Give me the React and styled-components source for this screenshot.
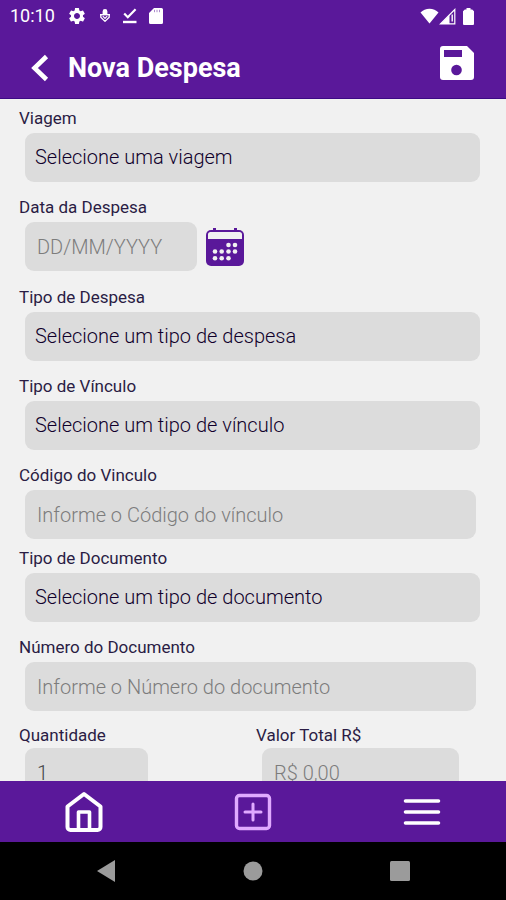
import React, { useState } from 'react'
import { MdSettings } from 'react-icons/md'
import styled, { createGlobalStyle } from 'styled-components'

const purple = '#5a189a'
const ink = '#10002b'

const GlobalStyle = createGlobalStyle`
	* {
		box-sizing: border-box;
	}

	body {
		margin: 0;
		background: #f1f1f1;
		font-family: Roboto, 'Liberation Sans', sans-serif;
		color: ${ink};
	}

	button, input, select {
		font: inherit;
		color: inherit;
	}
`

const Screen = styled.div`
	display: flex;
	flex-direction: column;
	height: 100vh;
`

const StatusBar = styled.div`
	display: flex;
	align-items: center;
	justify-content: space-between;
	height: 32px;
	padding: 0 32px 0 10px;
	background: ${purple};
	color: #fff;
	font-size: 18px;
	line-height: 32px;
`

const StatusGroup = styled.div`
	display: flex;
	align-items: center;
	gap: ${p => p.$gap}px;

	svg {
		display: block;
	}
`

const Header = styled.header`
	display: flex;
	align-items: center;
	height: 67px;
	padding: 6px 32px 0 30px;
	background: ${purple};
	border-bottom: 1px solid #3c0a85;
	color: #fff;
`

const Title = styled.h1`
	flex: 1;
	margin: 0 0 0 18px;
	font-size: 27px;
	line-height: 32px;
	font-weight: 700;
`

const IconButton = styled.button`
	display: flex;
	align-items: center;
	justify-content: center;
	padding: 0;
	border: 0;
	background: none;
	cursor: pointer;
`

const SaveButton = styled(IconButton)`
	margin-bottom: 10px;
`

const Form = styled.form`
	flex: 1;
	min-height: 0;
	padding: 9px 19px 0;
	overflow-y: auto;
	scrollbar-width: none;
`

const Field = styled.div`
	display: flex;
	flex-direction: column;
	gap: ${p => (p.$tight ? 3 : 5)}px;
	margin-bottom: ${p => p.$space ?? 15}px;
`

const Label = styled.label`
	color: #2a1c44;
	font-size: 17px;
	line-height: 20px;
`

const Select = styled.select`
	appearance: none;
	height: 49px;
	margin: 0 7px 0 6px;
	padding: 0 10px 2px;
	border: 0;
	border-radius: 9px;
	background: #dcdcdc;
	font-size: 20px;
	font-weight: 300;
`

const Input = styled.input`
	width: ${p => (p.$width ? `${p.$width}px` : 'auto')};
	height: 49px;
	margin: 0 11px 0 6px;
	padding: 0 12px;
	border: 0;
	border-radius: 9px;
	background: #dcdcdc;
	color: #444;
	font-size: 20px;
	font-weight: 300;

	&::placeholder {
		color: #7c7c7c;
		opacity: 1;
	}
`

const DateRow = styled.div`
	display: flex;
	height: 50px;

	${Input} {
		margin-right: 9px;
	}
`

const Columns = styled.div`
	display: grid;
	grid-template-columns: 1fr 1fr;
	gap: 6px;
`

const TabBar = styled.nav`
	display: grid;
	grid-template-columns: repeat(3, 1fr);
	height: 61px;
	background: ${purple};
	color: #fff;
`

const SystemBar = styled.div`
	display: grid;
	grid-template-columns: repeat(3, 1fr);
	height: 58px;
	padding: 0 33px;
	background: #000;
	color: #9b9b9b;
`

function DebugIcon() {
	return (
		<svg width='12' height='16' viewBox='0 0 12 16' fill='none' stroke='currentColor'>
			<path d='M3.6 6V3.4a2.4 2.4 0 0 1 4.8 0V6z' fill='currentColor' stroke='none' />
			<path d='M1 6.7h10' strokeWidth='1.4' />
			<path d='M1.8 7v2.2L6 13.4l4.2-4.2V7' strokeWidth='1.3' strokeLinejoin='round' />
			<path d='M3.8 8.2L6 10.4l2.2-2.2' strokeWidth='1.2' />
		</svg>
	)
}

function DoneIcon() {
	return (
		<svg width='14' height='16' viewBox='0 0 14 16' fill='none' stroke='currentColor' strokeWidth='2.2'>
			<path d='M1.2 5.5l3.6 3.7L12.6 1.2' />
			<path d='M0 14h13.5' strokeWidth='2.4' />
		</svg>
	)
}

function SdCardIcon() {
	return (
		<svg width='14' height='16' viewBox='0 0 14 16'>
			<path
				d='M5 0h7.5A1.5 1.5 0 0 1 14 1.5v13a1.5 1.5 0 0 1-1.5 1.5h-11A1.5 1.5 0 0 1 0 14.5V5z'
				fill='currentColor'
			/>
			<path d='M5.5 1.8v2.4M8 1.8v2.4M10.5 1.8v2.4' stroke={purple} strokeOpacity='.5' />
		</svg>
	)
}

function WifiIcon() {
	return (
		<svg width='19' height='16' viewBox='0 0 19 16' fill='currentColor'>
			<path d='M.5 4.6C5 -.6 14 -.6 18.5 4.6L9.5 15.5z' />
		</svg>
	)
}

function SignalIcon() {
	return (
		<svg width='17' height='17' viewBox='0 0 17 17'>
			<path d='M1.5 15.8H15.8V1.5z' fill='none' stroke='currentColor' strokeWidth='1.2' />
			<path d='M1.5 16L10.5 7v9z' fill='currentColor' />
			<path d='M13.2 6.5v7' stroke='currentColor' strokeWidth='1.4' />
		</svg>
	)
}

function BatteryIcon() {
	return (
		<svg width='11' height='17' viewBox='0 0 11 17' fill='currentColor'>
			<path d='M3.5 0h4v1.5h1.7L11 3.3V16a1 1 0 0 1-1 1H1a1 1 0 0 1-1-1V3.3L1.8 1.5h1.7z' />
		</svg>
	)
}

function BackIcon() {
	return (
		<svg width='20' height='28' viewBox='0 0 20 28' fill='none' stroke='currentColor'>
			<path d='M16.5 2.5L4.5 14l12 11.5' strokeWidth='4.6' />
		</svg>
	)
}

function SaveIcon() {
	return (
		<svg width='34' height='34' viewBox='0 0 34 34'>
			<path
				d='M3 0h24l7 7v24a3 3 0 0 1-3 3H3a3 3 0 0 1-3-3V3a3 3 0 0 1 3-3z'
				fill='#fff'
			/>
			<path d='M4 4h18v7H4z' fill={purple} />
			<circle cx='16.5' cy='24' r='5.3' fill={purple} />
		</svg>
	)
}

const dots = [
	[22.5, 17], [29, 17],
	[9, 23.5], [15.7, 23.5], [22.5, 23.5], [29, 23.5],
	[9, 30.2], [15.7, 30.2], [22.5, 30.2],
]

function CalendarIcon() {
	return (
		<svg width='38' height='38' viewBox='0 0 38 38'>
			<path d='M7 0h3v4H7zM28 0h3v4h-3z' fill={purple} />
			<rect y='2' width='38' height='36' rx='5' fill={purple} />
			<path d='M2 11V6.5A2.5 2.5 0 0 1 4.5 4h29A2.5 2.5 0 0 1 36 6.5V11z' fill='#f1f1f1' />
			{dots.map(([x, y]) => (
				<circle key={`${x}-${y}`} cx={x} cy={y} r='2.3' fill='#f1f1f1' />
			))}
		</svg>
	)
}

function HomeIcon() {
	return (
		<svg width='38' height='42' viewBox='0 0 38 42' fill='none' stroke='currentColor' strokeWidth='4' strokeLinejoin='round'>
			<path d='M2.5 15.5L19 3l16.5 12.5V36a3 3 0 0 1-3 3h-27a3 3 0 0 1-3-3z' />
			<path d='M13.5 39V21h11v18' strokeWidth='3.6' />
		</svg>
	)
}

function AddIcon() {
	return (
		<svg width='38' height='38' viewBox='0 0 38 38' fill='none' stroke='#e0aaff' strokeWidth='3.4'>
			<rect x='2.5' y='2.5' width='33' height='33' rx='3' />
			<path d='M19 11v16M11 19h16' strokeLinecap='round' strokeWidth='3' />
		</svg>
	)
}

function MenuIcon() {
	return (
		<svg width='38' height='28' viewBox='0 0 38 28' stroke='currentColor' strokeWidth='3.6' strokeLinecap='round'>
			<path d='M2.5 3h33M2.5 14h33M2.5 25h33' />
		</svg>
	)
}

function SelectField({ id, label, placeholder }) {
	return (
		<Field>
			<Label htmlFor={id}>{label}</Label>
			<Select id={id}>
				<option>{placeholder}</option>
			</Select>
		</Field>
	)
}

export default function App() {
	const [quantidade, setQuantidade] = useState('1')

	return (
		<Screen>
			<GlobalStyle />
			<StatusBar>
				<StatusGroup $gap={12}>
					<span>10:10</span>
					<MdSettings size={20} />
					<DebugIcon />
					<DoneIcon />
					<SdCardIcon />
				</StatusGroup>
				<StatusGroup $gap={7}>
					<StatusGroup $gap={0}>
						<WifiIcon />
						<SignalIcon />
					</StatusGroup>
					<BatteryIcon />
				</StatusGroup>
			</StatusBar>
			<Header>
				<IconButton type='button' aria-label='Voltar'>
					<BackIcon />
				</IconButton>
				<Title>Nova Despesa</Title>
				<SaveButton type='submit' form='despesa' aria-label='Salvar'>
					<SaveIcon />
				</SaveButton>
			</Header>

			<Form id='despesa' onSubmit={e => e.preventDefault()}>
				<SelectField id='viagem' label='Viagem' placeholder='Selecione uma viagem' />
				<Field>
					<Label htmlFor='data'>Data da Despesa</Label>
					<DateRow>
						<Input id='data' $width={172} placeholder='DD/MM/YYYY' />
						<IconButton type='button' aria-label='Abrir calendário'>
							<CalendarIcon />
						</IconButton>
					</DateRow>
				</Field>
				<SelectField id='tipo-despesa' label='Tipo de Despesa' placeholder='Selecione um tipo de despesa' />
				<SelectField id='tipo-vinculo' label='Tipo de Vínculo' placeholder='Selecione um tipo de vínculo' />
				<Field $space={9}>
					<Label htmlFor='codigo'>Código do Vinculo</Label>
					<Input id='codigo' placeholder='Informe o Código do vínculo' />
				</Field>
				<SelectField id='tipo-documento' label='Tipo de Documento' placeholder='Selecione um tipo de documento' />
				<Field $space={14}>
					<Label htmlFor='numero'>Número do Documento</Label>
					<Input id='numero' placeholder='Informe o Número do documento' />
				</Field>
				<Columns>
					<Field $tight>
						<Label htmlFor='quantidade'>Quantidade</Label>
						<Input
							id='quantidade'
							$width={123}
							value={quantidade}
							onChange={e => setQuantidade(e.target.value)}
						/>
					</Field>
					<Field $tight>
						<Label htmlFor='valor'>Valor Total R$</Label>
						<Input id='valor' $width={197} placeholder='R$ 0,00' />
					</Field>
				</Columns>
			</Form>

			<TabBar>
				<IconButton type='button' aria-label='Início'>
					<HomeIcon />
				</IconButton>
				<IconButton type='button' aria-label='Adicionar'>
					<AddIcon />
				</IconButton>
				<IconButton type='button' aria-label='Menu'>
					<MenuIcon />
				</IconButton>
			</TabBar>
			<SystemBar>
				<IconButton type='button' aria-label='Voltar do sistema'>
					<svg width='18' height='22' viewBox='0 0 18 22' fill='currentColor'>
						<path d='M18 0v22L0 11z' />
					</svg>
				</IconButton>
				<IconButton type='button' aria-label='Tela inicial'>
					<svg width='20' height='20' viewBox='0 0 20 20' fill='currentColor'>
						<circle cx='10' cy='10' r='9.5' />
					</svg>
				</IconButton>
				<IconButton type='button' aria-label='Aplicativos recentes'>
					<svg width='20' height='20' viewBox='0 0 20 20' fill='currentColor'>
						<rect width='20' height='20' rx='1.5' />
					</svg>
				</IconButton>
			</SystemBar>
		</Screen>
	)
}
